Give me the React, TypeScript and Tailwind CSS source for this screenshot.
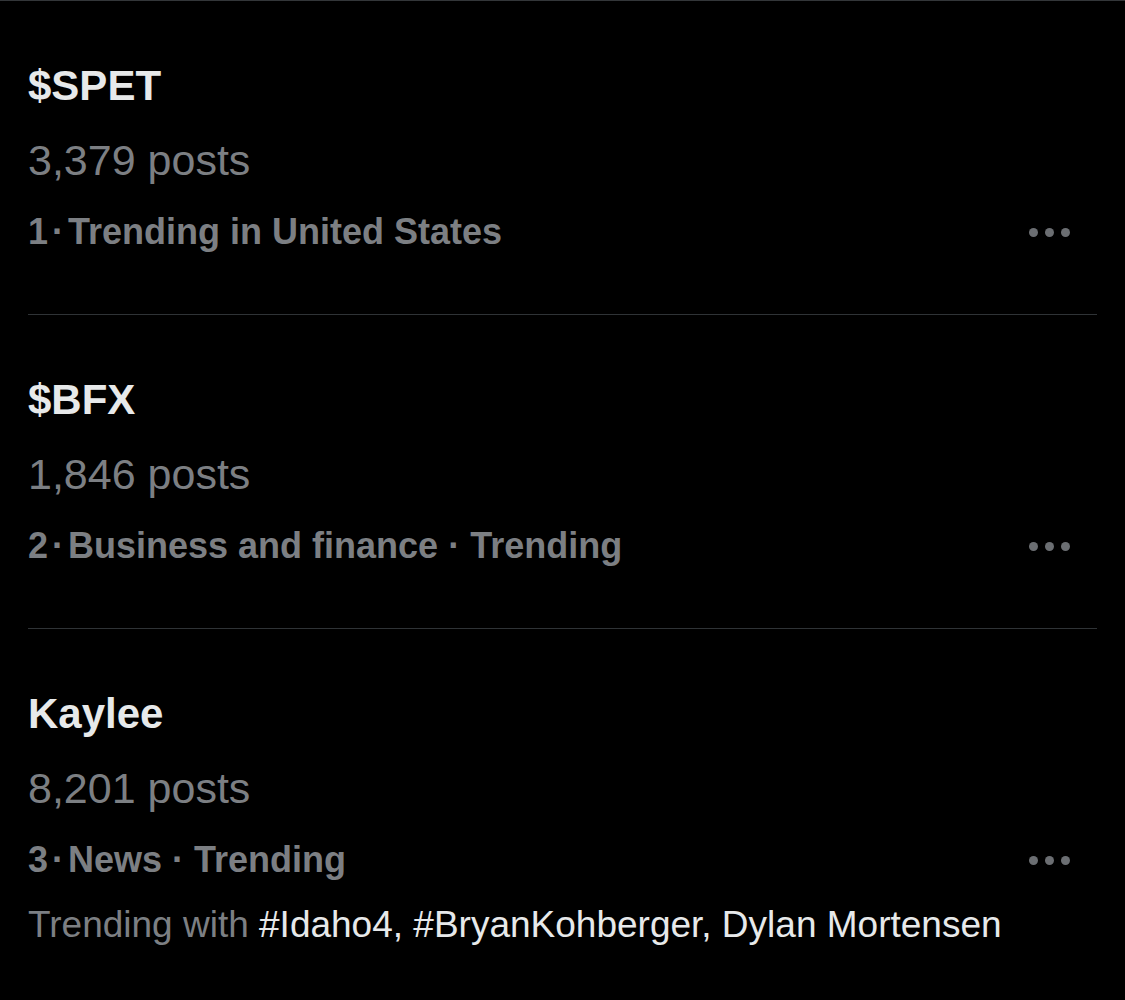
import React from 'react';

interface TrendType {
  id: number;
  rank: number;
  title: string;
  posts: string;
  category: string[];
  trendingWith?: string;
}

const trends: TrendType[] = [
  {
    id: 1,
    rank: 1,
    title: '$SPET',
    posts: '3,379 posts',
    category: ['Trending in United States'],
  },
  {
    id: 2,
    rank: 2,
    title: '$BFX',
    posts: '1,846 posts',
    category: ['Business and finance', 'Trending'],
  },
  {
    id: 3,
    rank: 3,
    title: 'Kaylee',
    posts: '8,201 posts',
    category: ['News', 'Trending'],
    trendingWith: '#Idaho4, #BryanKohberger, Dylan Mortensen',
  },
];

function MoreDots() {
  return (
    <div className="flex items-center gap-[7px] mr-[27px]">
      <span className="block w-[9px] h-[9px] rounded-full bg-[#6b6e72]" />
      <span className="block w-[9px] h-[9px] rounded-full bg-[#6b6e72]" />
      <span className="block w-[9px] h-[9px] rounded-full bg-[#6b6e72]" />
    </div>
  );
}

function TrendItem({ trend, last }: { trend: TrendType; last: boolean }) {
  return (
    <div
      className={`pt-[48px] ${
        last ? 'pb-[40px]' : 'pb-[48px] border-b border-[#2f3336]'
      }`}
    >
      <div className="text-[42px] leading-[73px] font-bold text-[#e7e9ea]">
        {trend.title}
      </div>
      <div className="text-[43px] leading-[76px] text-[#7c7f83]">
        {trend.posts}
      </div>
      <div className="flex items-center justify-between">
        <div className="text-[36px] leading-[68px] font-bold text-[#7c7f83]">
          {trend.rank}
          <span className="px-[4px]">·</span>
          {trend.category.join(' · ')}
        </div>
        <MoreDots />
      </div>
      {trend.trendingWith && (
        <div className="text-[37px] leading-[61px] text-[#7c7f83]">
          Trending with{' '}
          <span className="text-[#e7e9ea]">{trend.trendingWith}</span>
        </div>
      )}
    </div>
  );
}

export default function App() {
  return (
    <div
      className="min-h-[1000px] w-full bg-black border-t border-[#333639]"
      style={{ fontFamily: '"Liberation Sans", Arial, sans-serif' }}
    >
      <div className="px-[28px]">
        {trends.map((trend, index) => (
          <TrendItem
            key={trend.id}
            trend={trend}
            last={index === trends.length - 1}
          />
        ))}
      </div>
    </div>
  );
}
